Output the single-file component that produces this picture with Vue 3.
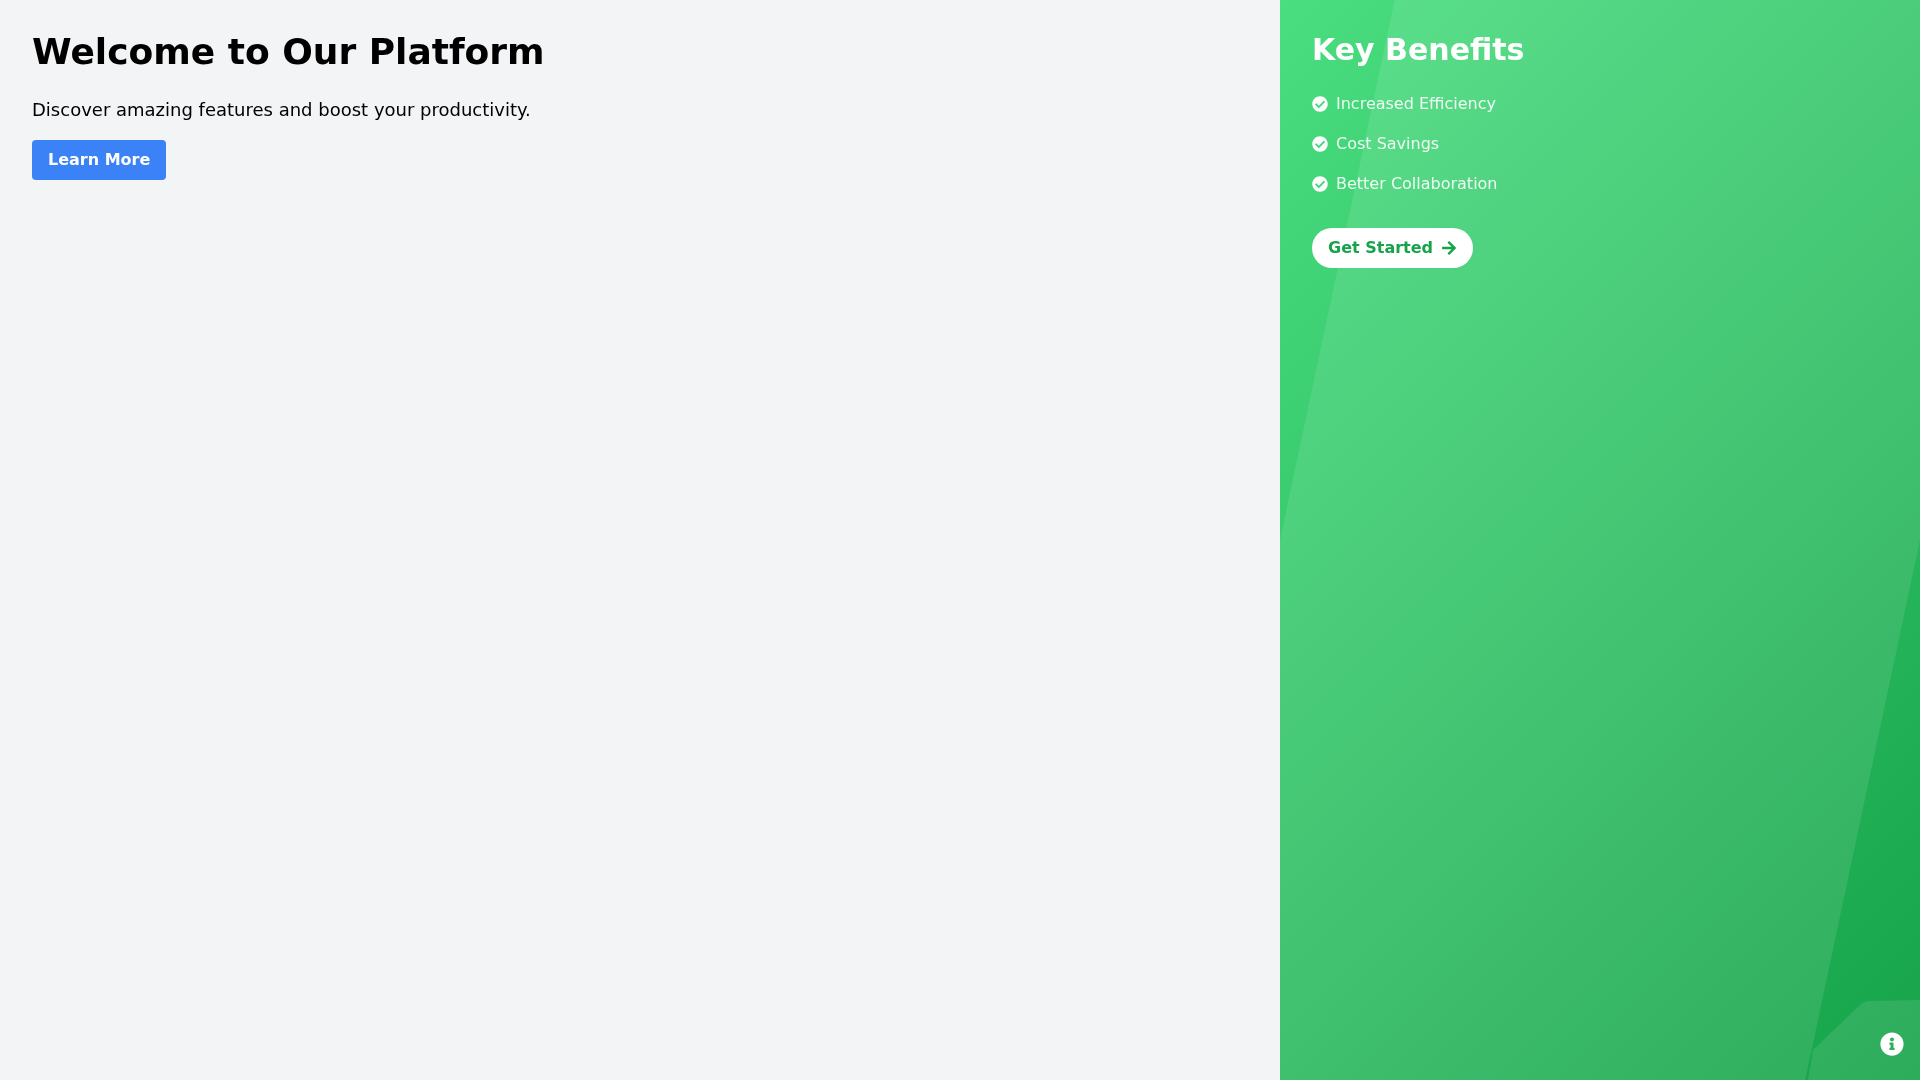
<script setup>
const benefits = ['Increased Efficiency', 'Cost Savings', 'Better Collaboration']
</script>

<template>
  <div class="page">
    <main class="main">
      <div class="main-body">
        <h1>Welcome to Our Platform</h1>
        <p>Discover amazing features and boost your productivity.</p>
        <button class="learn">Learn More</button>
      </div>
    </main>

    <aside class="side">
      <div class="shine"></div>
      <div class="corner"></div>
      <div class="side-body">
        <h2>Key Benefits</h2>
        <ul>
          <li v-for="item in benefits" :key="item">
            <svg class="check" viewBox="0 0 512 512"><path fill="currentColor" d="M504 256c0 136.967-111.033 248-248 248S8 392.967 8 256 119.033 8 256 8s248 111.033 248 248zM227.314 387.314l184-184c6.248-6.248 6.248-16.379 0-22.627l-22.627-22.627c-6.248-6.249-16.379-6.249-22.628 0L216 308.118l-70.059-70.059c-6.248-6.248-16.379-6.248-22.628 0l-22.627 22.627c-6.248 6.248-6.248 16.379 0 22.627l104 104c6.249 6.249 16.379 6.249 22.628.001z"/></svg>
            <span class="label">{{ item }}</span>
          </li>
        </ul>
        <button class="start">
          <span>Get Started</span>
          <svg class="arrow" viewBox="0 0 448 512"><path fill="currentColor" d="M190.5 66.9l22.2-22.2c9.4-9.4 24.6-9.4 33.9 0L441 239c9.4 9.4 9.4 24.6 0 33.9L246.6 467.3c-9.4 9.4-24.6 9.4-33.9 0l-22.2-22.2c-9.5-9.5-9.3-25 .4-34.3L311.4 296H24c-13.3 0-24-10.7-24-24v-32c0-13.3 10.7-24 24-24h287.4L190.9 101.2c-9.8-9.3-10-24.8-.4-34.3z"/></svg>
        </button>
      </div>
      <svg class="info" viewBox="0 0 512 512"><path fill="currentColor" d="M256 8C119.043 8 8 119.083 8 256c0 136.997 111.043 248 248 248s248-111.003 248-248C504 119.083 392.957 8 256 8zm0 110c23.196 0 42 18.804 42 42s-18.804 42-42 42-42-18.804-42-42 18.804-42 42-42zm56 254c0 6.627-5.373 12-12 12h-88c-6.627 0-12-5.373-12-12v-24c0-6.627 5.373-12 12-12h12v-64h-12c-6.627 0-12-5.373-12-12v-24c0-6.627 5.373-12 12-12h64c6.627 0 12 5.373 12 12v100h12c6.627 0 12 5.373 12 12v24z"/></svg>
    </aside>
  </div>
</template>

<style>
html, body {
  margin: 0;
  padding: 0;
}
</style>

<style scoped>
.page {
  display: flex;
  height: 100vh;
  overflow: hidden;
  font-family: "DejaVu Sans", sans-serif;
}

.main {
  width: 1280px;
  box-sizing: border-box;
  padding: 32px;
  background: #f3f4f6;
  color: #000;
}

/* own layer, keeps the text on grayscale antialiasing */
.main-body,
.side-body {
  will-change: transform;
}

h1 {
  margin: 0 0 24px;
  font-size: 36px;
  line-height: 40px;
  font-weight: 700;
}

.main p {
  margin: 0 0 16px;
  font-size: 18px;
  line-height: 28px;
}

.learn {
  display: block;
  padding: 8px 16px;
  border: 0;
  border-radius: 4px;
  background: #3b82f6;
  color: #fff;
  font: 700 16px/24px "DejaVu Sans", sans-serif;
}

.side {
  position: relative;
  width: 640px;
  overflow: hidden;
  background: linear-gradient(135deg, #4ade80, #16a34a);
  color: #fff;
}

.shine {
  position: absolute;
  inset: 0;
  background: rgba(255, 255, 255, 0.1);
  transform: skewX(-12deg);
}

.corner {
  position: absolute;
  right: 0;
  bottom: 0;
  width: 114px;
  height: 80px;
  background: rgba(255, 255, 255, 0.1);
  clip-path: polygon(7px 50px, 56px 3px, 62px 1px, 100% 0, 100% 100%, 2px 100%);
}

.side-body {
  position: relative;
  padding: 32px;
}

h2 {
  margin: 0 0 24px;
  font-size: 30px;
  line-height: 36px;
  font-weight: 700;
}

ul {
  margin: 0 0 32px;
  padding: 0;
  list-style: none;
}

li {
  display: flex;
  align-items: center;
  gap: 8px;
  margin-bottom: 16px;
  font-size: 16px;
  line-height: 24px;
}

li:last-child {
  margin-bottom: 0;
}

.label {
  opacity: 0.9;
}

.check {
  width: 16px;
  height: 16px;
}

.start {
  display: inline-flex;
  align-items: center;
  gap: 9px;
  padding: 8px 17px 8px 16px;
  border: 0;
  border-radius: 20px;
  background: #fff;
  color: #16a34a;
  font: 700 16px/24px "DejaVu Sans", sans-serif;
}

.arrow {
  width: 14px;
  height: 16px;
}

.info {
  position: absolute;
  right: 16px;
  bottom: 24px;
  width: 24px;
  height: 24px;
}
</style>
